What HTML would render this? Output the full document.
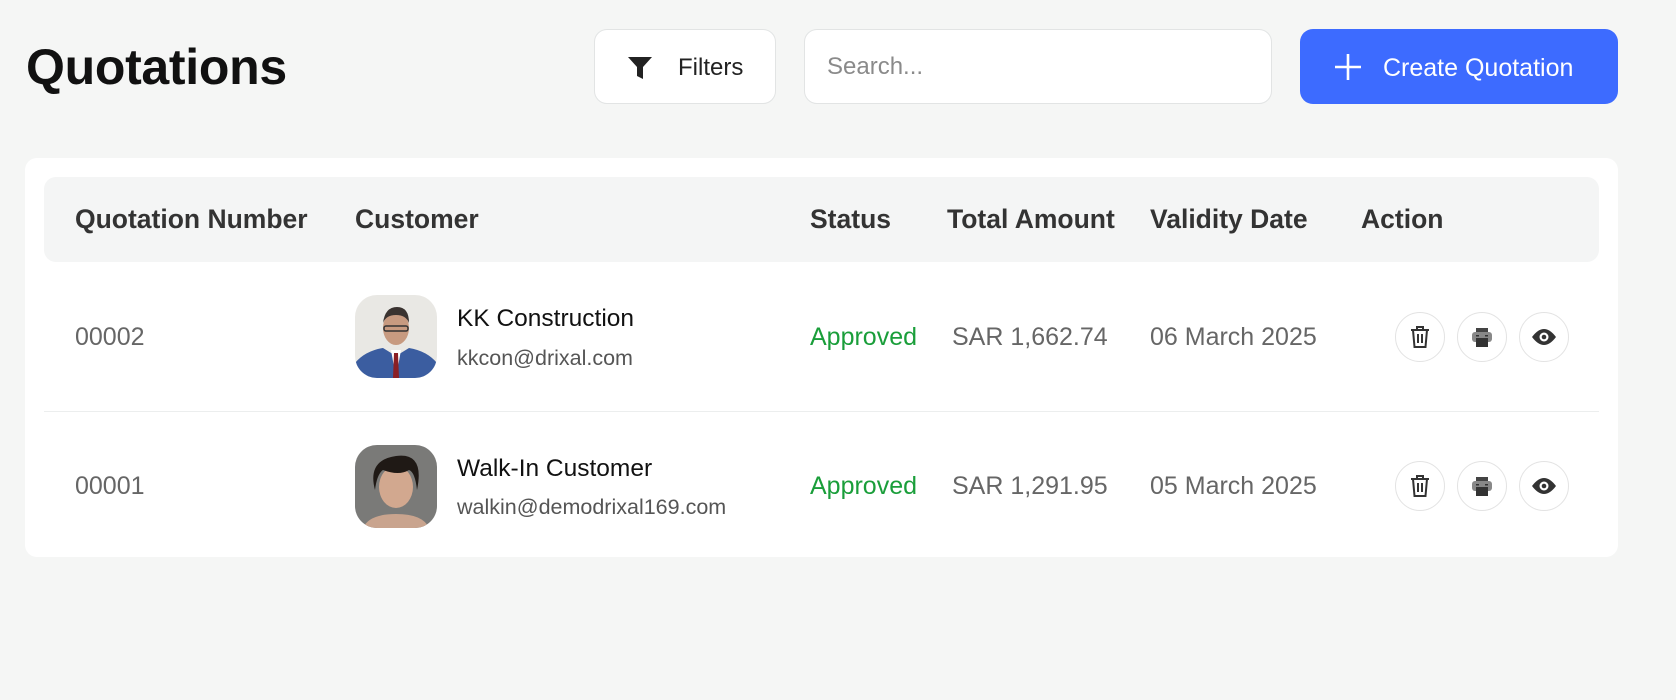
<!DOCTYPE html>
<html><head><meta charset="utf-8"><style>
*{box-sizing:border-box;margin:0;padding:0}
body{width:1676px;height:700px;background:#f5f6f5;font-family:"Liberation Sans",Arial,sans-serif;position:relative;overflow:hidden}
.abs{position:absolute}
h1{position:absolute;left:26px;top:38px;font-size:50px;font-weight:700;color:#111;letter-spacing:-0.3px}
.btn{position:absolute;top:29px;height:75px;border-radius:13px;display:flex;align-items:center}
.filters{left:594px;width:182px;background:#fff;border:1px solid #e2e4e4}
.search{left:804px;width:468px;background:#fff;border:1px solid #e2e4e4;font-size:24px;color:#8a8a8a;padding-left:22px}
.create{left:1300px;width:318px;background:#3d6bff;color:#fff;font-size:25px}
.card{position:absolute;left:25px;top:158px;width:1593px;height:399px;background:#fff;border-radius:12px}
.head{position:absolute;left:44px;top:177px;width:1555px;height:85px;background:#f4f5f5;border-radius:12px}
.th{position:absolute;top:204px;font-size:26.5px;font-weight:700;color:#333}
.td{position:absolute;font-size:25px;color:#666}
.green{color:#1a9e3a}
.name{font-size:24.5px;color:#111}
.email{font-size:21.5px;color:#555}
.ic{position:absolute;width:50px;height:50px;border-radius:50%;border:1px solid #e3e3e3;display:flex;align-items:center;justify-content:center;background:#fff}
.av{position:absolute;left:355px;width:82px;height:83px;border-radius:22px;overflow:hidden}
</style></head><body>
<h1>Quotations</h1>
<div class="btn filters"><svg class="abs" style="left:32px;top:26px" width="26" height="24" viewBox="0 0 26 24"><path d="M1 1h24l-9 10v12l-6-3V11z" fill="#222"/></svg><span class="abs" style="left:83px;top:24px;font-size:24px;color:#222">Filters</span></div>
<div class="btn search">Search...</div>
<div class="btn create"><svg class="abs" style="left:34px;top:24px" width="28" height="28" viewBox="0 0 28 28"><path d="M14 1v26M1 14h26" stroke="#fff" stroke-width="2.6"/></svg><span class="abs" style="left:83px;top:25px">Create Quotation</span></div>
<div class="card"></div>
<div class="head"></div>
<div class="th" style="left:75px">Quotation Number</div>
<div class="th" style="left:355px">Customer</div>
<div class="th" style="left:810px">Status</div>
<div class="th" style="left:947px">Total Amount</div>
<div class="th" style="left:1150px">Validity Date</div>
<div class="th" style="left:1361px">Action</div>
<div class="abs" style="left:44px;top:411px;width:1555px;height:1px;background:#eceeee"></div>

<div class="td" style="left:75px;top:323px">00002</div>
<div class="av" style="top:295px"><svg width="82" height="83" viewBox="0 0 82 83"><rect width="82" height="83" fill="#e9e8e4"/><path d="M0 83V68q10-12 28-15l13 8 13-8q18 3 28 15v15z" fill="#3b5da0"/><path d="M36 55l5 28 5-28z" fill="#fff"/><path d="M39 58h4l1 25h-6z" fill="#8a1f25"/><ellipse cx="41" cy="33" rx="13" ry="17" fill="#c79a80"/><path d="M28 28q2-16 14-16t12 16q-3-8-13-8t-13 8z" fill="#3a3330"/><rect x="29" y="31" width="24" height="5" rx="2" fill="none" stroke="#333" stroke-width="1.5"/></svg></div>
<div class="abs name" style="left:457px;top:305px">KK Construction</div>
<div class="abs email" style="left:457px;top:346px">kkcon@drixal.com</div>
<div class="td green" style="left:810px;top:323px">Approved</div>
<div class="td" style="left:952px;top:323px">SAR 1,662.74</div>
<div class="td" style="left:1150px;top:323px">06 March 2025</div>

<div class="td" style="left:75px;top:472px">00001</div>
<div class="av" style="top:445px"><svg width="82" height="83" viewBox="0 0 82 83"><rect width="82" height="83" fill="#7a7a78"/><path d="M8 83q6-14 33-14t33 14z" fill="#c9a48e"/><ellipse cx="41" cy="42" rx="17" ry="21" fill="#d2a88f"/><path d="M20 45q-8-30 21-34t21 34q-2-18-8-20-10 6-26 0-6 4-8 20z" fill="#1f1915"/></svg></div>
<div class="abs name" style="left:457px;top:455px">Walk-In Customer</div>
<div class="abs email" style="left:457px;top:495px">walkin@demodrixal169.com</div>
<div class="td green" style="left:810px;top:472px">Approved</div>
<div class="td" style="left:952px;top:472px">SAR 1,291.95</div>
<div class="td" style="left:1150px;top:472px">05 March 2025</div>

<div class="ic" style="left:1395px;top:312px"><svg width="22" height="24" viewBox="0 0 22 24"><path d="M2 5h18M8 5V2h6v3M4 5l1.5 17h11L18 5M9 9v9M13 9v9" fill="none" stroke="#333" stroke-width="2"/></svg></div>
<div class="ic" style="left:1457px;top:312px"><svg width="24" height="24" viewBox="0 0 24 24"><path d="M6 3h12v5H6z" fill="#444"/><rect x="2" y="7" width="20" height="10" rx="3" fill="#888"/><path d="M6 13h12v9H6z" fill="#333"/><rect x="6" y="10" width="3" height="1.5" fill="#333"/><rect x="15" y="10" width="3" height="1.5" fill="#333"/></svg></div>
<div class="ic" style="left:1519px;top:312px"><svg width="26" height="18" viewBox="0 0 26 18"><path d="M1 9q12-16 24 0-12 16-24 0z" fill="#333"/><circle cx="13" cy="9" r="4.5" fill="#fff"/><circle cx="13" cy="9" r="2.3" fill="#333"/></svg></div>
<div class="ic" style="left:1395px;top:461px"><svg width="22" height="24" viewBox="0 0 22 24"><path d="M2 5h18M8 5V2h6v3M4 5l1.5 17h11L18 5M9 9v9M13 9v9" fill="none" stroke="#333" stroke-width="2"/></svg></div>
<div class="ic" style="left:1457px;top:461px"><svg width="24" height="24" viewBox="0 0 24 24"><path d="M6 3h12v5H6z" fill="#444"/><rect x="2" y="7" width="20" height="10" rx="3" fill="#888"/><path d="M6 13h12v9H6z" fill="#333"/><rect x="6" y="10" width="3" height="1.5" fill="#333"/><rect x="15" y="10" width="3" height="1.5" fill="#333"/></svg></div>
<div class="ic" style="left:1519px;top:461px"><svg width="26" height="18" viewBox="0 0 26 18"><path d="M1 9q12-16 24 0-12 16-24 0z" fill="#333"/><circle cx="13" cy="9" r="4.5" fill="#fff"/><circle cx="13" cy="9" r="2.3" fill="#333"/></svg></div>
</body></html>
